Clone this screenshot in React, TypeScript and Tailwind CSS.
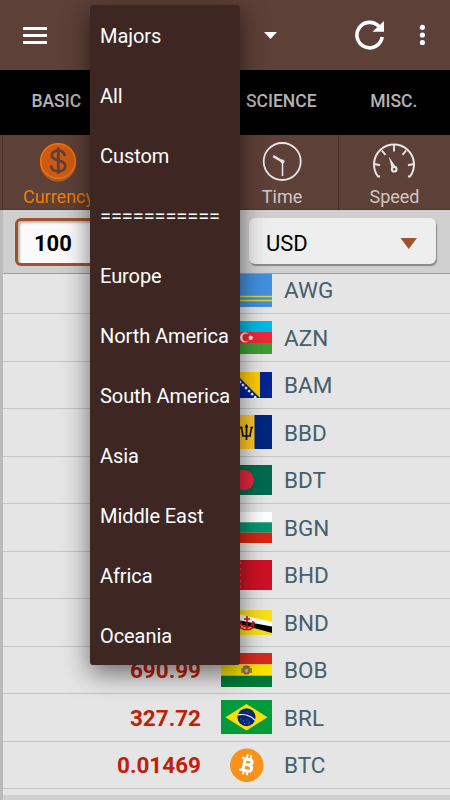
import type { ReactNode } from "react";

interface FlagProps {
  height: number;
  children: ReactNode;
}

function Flag({ height, children }: FlagProps) {
  return (
    <svg width="51" height={height} viewBox={`0 0 51 ${height}`} className="block">
      {children}
    </svg>
  );
}

function Stripes({ height, colors }: { height: number; colors: string[] }) {
  const step = height / colors.length;
  return (
    <>
      {colors.map((color, i) => (
        <rect key={color} y={i * step} width="51" height={step} fill={color} />
      ))}
    </>
  );
}

const flags: Record<string, ReactNode> = {
  AWG: (
    <Flag height={34}>
      <rect width="51" height="34" fill="#418fde" />
      <path d="M0 23.5h51M0 27.500h51" stroke="#e5d32f" strokeWidth="1.6" />
    </Flag>
  ),
  AZN: (
    <Flag height={33}>
      <Stripes height={33} colors={["#00b9e4", "#ed2939", "#3f9c35"]} />
      <circle cx="24" cy="16.5" r="5" fill="#fff" />
      <circle cx="25.4" cy="16.5" r="4" fill="#ed2939" />
      <path
        d="M29.7 14l.6 1.5 1.5-.6-.6 1.4 1.3.6-1.4.6.6 1.4-1.4-.6-.6 1.3-.6-1.3-1.4.6.6-1.4-1.4-.6 1.4-.6-.6-1.4 1.4.6z"
        fill="#fff"
      />
    </Flag>
  ),
  BAM: (
    <Flag height={26}>
      <rect width="51" height="26" fill="#002395" />
      <path d="M13 0h26v26z" fill="#fecb00" />
      <path
        d="M9 0L36 27"
        stroke="#fff"
        strokeWidth="2.4"
        strokeDasharray="2.4 1.9"
      />
    </Flag>
  ),
  BBD: (
    <Flag height={34}>
      <rect width="51" height="34" fill="#00267f" />
      <rect x="16" width="17.500" height="34" fill="#ffc726" />
      <path
        d="M25.5 10v15M19.7 12c2 3 1.7 6 2.2 9h7.2c.5-3 .2-6 2.2-9"
        fill="none"
        stroke="#111"
        strokeWidth="1.7"
      />
      <path
        d="M25.5 8.500l1.800 4h-3.600zM18.700 11.500l3.300.5-1.500 2.500zM32.300 11.500l-3.300.5 1.500 2.500z"
        fill="#111"
      />
    </Flag>
  ),
  BDT: (
    <Flag height={30}>
      <rect width="51" height="30" fill="#006a4e" />
      <circle cx="22.8" cy="15" r="10.2" fill="#e5283d" />
    </Flag>
  ),
  BGN: (
    <Flag height={31}>
      <Stripes height={31} colors={["#ffffff", "#00966e", "#d62612"]} />
    </Flag>
  ),
  BHD: (
    <Flag height={30}>
      <rect width="51" height="30" fill="#ce1126" />
      <path
        d="M0 0h14l6 3-6 3 6 3-6 3 6 3-6 3 6 3-6 3 6 3-6 3H0z"
        fill="#fff"
      />
    </Flag>
  ),
  BND: (
    <Flag height={25}>
      <rect width="51" height="25" fill="#f7e017" />
      <path d="M0 0l51 14v5L0 6z" fill="#fff" />
      <path d="M0 6l51 9v8L0 9z" fill="#000" />
      <path d="M0 0L51 12v4.5L0 7z" fill="#fff" />
      <path
        d="M26 6v13M20 11c0 4 2 6 6 6s6-2 6-6M22 19.5h8M23 9h6M18.5 13l1 5 3 1M33 12l-1 6-3 1"
        fill="none"
        stroke="#cf1126"
        strokeWidth="1.5"
      />
    </Flag>
  ),
  BOB: (
    <Flag height={34}>
      <Stripes height={34} colors={["#d52b1e", "#f9e300", "#007934"]} />
      <ellipse cx="25.5" cy="17.5" rx="3" ry="3.2" fill="#6fa58c" stroke="#b5542b" strokeWidth="1.6" />
      <path d="M22 14l3.500-1 3.500 1M21 15v5M30 15v5" stroke="#8a6a2d" strokeWidth="1.4" fill="none" />
      <circle cx="25.5" cy="17.5" r="1.2" fill="#e8c33a" />
    </Flag>
  ),
  BRL: (
    <Flag height={34}>
      <rect width="51" height="34" fill="#009b3a" />
      <path d="M4.5 17.2L25.5 4l21 13.2-21 13.2z" fill="#fedf00" />
      <circle cx="25.5" cy="17.2" r="9" fill="#002776" />
      <path d="M16.8 14.8c6-1 13 1 17.2 5.4" stroke="#fff" strokeWidth="1.3" fill="none" />
      <path
        d="M19.500 19h.8M22 21h.8M25 20h.8M28 22h.8M23 23.500h.8M27 24h.8M26.500 12h.8"
        stroke="#9db0d4"
        strokeWidth=".8"
      />
    </Flag>
  ),
  BTC: (
    <svg width="34" height="34" viewBox="0 0 34 34" className="block">
      <circle cx="16.800" cy="17.300" r="16.700" fill="#f7931a" />
      <g transform="rotate(13 17 17)" fill="none" stroke="#fff">
        <path
          d="M14 11.200h4.500c3.800 0 3.800 5.400 0 5.400H14M18.500 16.600c5 0 5 6.200 0 6.200H14M14 10.500v13"
          strokeWidth="3"
        />
        <path d="M10.500 11h4M10.500 23h4" strokeWidth="2.4" />
        <path d="M15.300 6.500v4M19 6.500v4M15.300 23v4M19 23v4" strokeWidth="2" />
      </g>
    </svg>
  ),
};

const rates = [
  { code: "AWG" },
  { code: "AZN" },
  { code: "BAM" },
  { code: "BBD" },
  { code: "BDT" },
  { code: "BGN" },
  { code: "BHD" },
  { code: "BND" },
  { code: "BOB", value: "690.99" },
  { code: "BRL", value: "327.72" },
  { code: "BTC", value: "0.01469" },
];

const regions = [
  "Majors",
  "All",
  "Custom",
  "===========",
  "Europe",
  "North America",
  "South America",
  "Asia",
  "Middle East",
  "Africa",
  "Oceania",
];

function Header() {
  return (
    <header className="flex h-[70px] items-center bg-[#5d4037]">
      <button className="ml-[23px] flex w-6 flex-col gap-1">
        <span className="h-[3px] bg-white" />
        <span className="h-[3px] bg-white" />
        <span className="h-[3px] bg-white" />
      </button>
      <svg width="13" height="7" viewBox="0 0 13 7" className="ml-[217px]">
        <path d="M0 0h13L6.5 7z" fill="#fff" />
      </svg>
      <svg width="30" height="30" viewBox="0 0 30 30" className="ml-auto">
        <path
          d="M24 6.500A12.700 12.700 0 1 0 27.200 17"
          fill="none"
          stroke="#fff"
          strokeWidth="3.6"
        />
        <path d="M29 1v10.800H17.500z" fill="#fff" />
      </svg>
      <svg width="6" height="22" viewBox="0 0 6 22" className="ml-[34px] mr-[25px]">
        <circle cx="3.4" cy="3.3" r="2.6" fill="#fff" />
        <circle cx="3.4" cy="11" r="2.6" fill="#fff" />
        <circle cx="3.4" cy="18.5" r="2.6" fill="#fff" />
      </svg>
    </header>
  );
}

function Tabs() {
  return (
    <nav className="grid h-[65px] grid-cols-4 items-center bg-black pb-[3px] text-center text-[17.5px] font-medium text-[#b3b3b3]">
      <span>BASIC</span>
      <span />
      <span>SCIENCE</span>
      <span>MISC.</span>
    </nav>
  );
}

function CoinIcon() {
  return (
    <svg width="38" height="40" viewBox="0 0 38 40" className="-ml-0.5">
      <circle cx="19" cy="21.5" r="17.5" fill="#756660" stroke="#c75b16" strokeWidth="1" />
      <circle cx="19" cy="19" r="17.3" fill="#cc5a12" stroke="#f57400" strokeWidth="1.5" />
      <path
        d="M25.800 14.200c-.3-3.700-2.900-5.500-6.500-5.500-3.900 0-6.600 1.900-6.600 4.900 0 6.200 13.600 3.500 13.600 10.300 0 3.300-2.900 5.300-7 5.300-4.400 0-7.200-2.200-7.400-6M19.300 5.500v26.500"
        fill="none"
        stroke="#5d4037"
        strokeWidth="2.8"
      />
    </svg>
  );
}

function ClockIcon() {
  return (
    <svg width="40" height="40" viewBox="0 0 40 40" fill="none" stroke="#e8e5e4">
      <circle cx="20.2" cy="19.5" r="18.5" strokeWidth="1.8" />
      <path d="M20.5 19.5v14.5" strokeWidth="1.5" />
      <path d="M20.5 19.5L11.2 14.2" strokeWidth="2.5" />
      <circle cx="20.5" cy="19.5" r="1.6" fill="#e8e5e4" />
    </svg>
  );
}

function GaugeIcon() {
  return (
    <svg width="44" height="40" viewBox="0 0 44 40" fill="none" stroke="#e8e5e4" className="-ml-0.5">
      <path d="M6 34.500A20 20 0 1 1 38 34.500" strokeWidth="2" />
      <path
        d="M22 3v6.500M9.800 8.500l3.700 4.300M34.200 8.500l-3.700 4.300M2.500 22l5.500 1.200M41.500 22l-5.500 1.200M5.500 34.700l2.500-.4M38.500 34.700l-2.500-.4"
        strokeWidth="1.9"
      />
      <path d="M16.800 14.500l2.800 11.500 4-1.300z" fill="#e8e5e4" stroke="none" />
      <circle cx="22.2" cy="27.2" r="2.3" strokeWidth="2.2" />
    </svg>
  );
}

function UnitTabs() {
  return (
    <nav className="grid h-[75px] grid-cols-4 border-b border-[#4e352d] bg-[#5d4037] pl-0.5 text-lg text-[#cfc8c5]">
      <div className="flex flex-col items-center border-b-[6px] border-l border-b-[#78503f] border-l-[#4a312a] pt-[7px] text-[#ef7c0b]">
        <CoinIcon />
        <span className="leading-[29px]">Currency</span>
      </div>
      <div />
      <div className="flex flex-col items-center pt-[7px]">
        <ClockIcon />
        <span className="leading-[29px]">Time</span>
      </div>
      <div className="flex flex-col items-center border-l border-[#432c25] pt-[7px]">
        <GaugeIcon />
        <span className="leading-[29px]">Speed</span>
      </div>
    </nav>
  );
}

function AmountBar() {
  return (
    <div className="flex h-16 items-start border-b border-[#999] bg-[#cfcfcf] pl-3 pt-2">
      <div className="flex h-12 w-[218px] items-center rounded-md border-[3px] border-[#a0522d] bg-[#fafafa] pl-4 pt-0.5 text-[22px] font-bold text-black shadow-[inset_2px_2px_2px_#bbb]">
        100
      </div>
      <div className="ml-4 flex h-[46px] w-[187px] items-center justify-between rounded-md bg-[#eee] pl-[17px] pr-[19px] pt-1 text-[22px] text-black shadow-[1px_2px_1px_#888]">
        USD
        <svg width="17" height="11" viewBox="0 0 17 11">
          <path d="M.5 0H17L8.7 11z" fill="#a0522d" />
        </svg>
      </div>
    </div>
  );
}

function RegionMenu() {
  return (
    <ul className="absolute left-[90px] top-[5px] w-[150px] rounded-[3px] bg-[#3e2723] text-[20px] tracking-[-0.07px] text-white shadow-[0_8px_26px_rgba(0,0,0,0.55)]">
      {regions.map((region) => (
        <li key={region} className="flex h-[60px] items-center whitespace-nowrap pl-2.5 pt-px">
          {region}
        </li>
      ))}
    </ul>
  );
}

export default function App() {
  return (
    <div className="relative flex h-[800px] w-[450px] flex-col overflow-hidden bg-[#cfcfcf] font-[Roboto,sans-serif]">
      <Header />
      <Tabs />
      <UnitTabs />
      <div className="flex flex-1 flex-col border-l-[3px] border-[#bbb]">
        <AmountBar />
        <ul className="h-[521px] overflow-hidden bg-[#e5e5e5]">
          {rates.map((rate) => (
            <li
              key={rate.code}
              className="flex h-[47.5px] items-center border-b border-[#c4c4c4] text-[22.5px] text-[#455f6b] first:-mt-[7.5px]"
            >
              <span className="w-[198px] pt-[3px] text-right font-bold text-[#bf200a]">
                {rate.value}
              </span>
              <span className="ml-5 flex w-[51px] justify-center">{flags[rate.code]}</span>
              <span className="ml-3 pt-[3px]">{rate.code}</span>
            </li>
          ))}
        </ul>
      </div>
      <RegionMenu />
    </div>
  );
}
